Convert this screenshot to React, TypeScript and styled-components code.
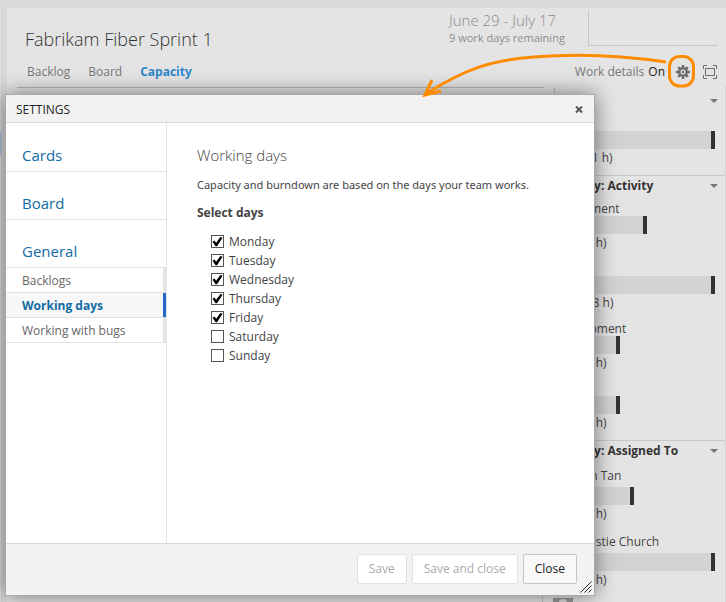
import React, { useState } from "react";
import styled, { createGlobalStyle } from "styled-components";

const GlobalStyle = createGlobalStyle`
  *, *::before, *::after { box-sizing: border-box; }
  body {
    margin: 0;
    background: #e4e4e4;
    color: #444;
    font: 12px/16px "Open Sans", "Noto Sans", sans-serif;
  }
  button, input { font: inherit; }
  h1, h2, h3, p, ul { margin: 0; padding: 0; font-weight: 400; }
  a { color: inherit; text-decoration: none; }
`;

const Page = styled.div`
  position: relative;
  height: 100vh;
  overflow: hidden;
  display: flex;
  flex-direction: column;
`;

const TopStrip = styled.div`
  flex: none;
  height: 8px;
  background: #dadada;
`;

const Columns = styled.div`
  flex: 1;
  display: flex;
  min-height: 0;
`;

const Rail = styled.div`
  flex: none;
  width: 7px;
  background: #d9d9d9;
  border-left: 1px solid #e2e2e2;
  box-shadow: inset 1px 0 #cdcdcd;
`;

const RailMark = styled.div`
  width: 2px;
  height: 23px;
  margin: 124px 0 0 -1px;
  background: #b4c4dc;
`;

const Main = styled.main`
  flex: 1;
  min-width: 0;
  display: flex;
  flex-direction: column;
`;

const TopBar = styled.header`
  display: grid;
  grid-template-columns: 1fr 139px 130px;
  height: 46px;
  padding: 0 8px 0 18px;
`;

const Title = styled.h1`
  padding-top: 17px;
  color: #333;
  font-size: 18px;
  font-weight: 300;
  line-height: 28px;
`;

const SprintDates = styled.div`
  padding-top: 2px;
  color: #8c8c8c;
  font-size: 11px;
  white-space: nowrap;
`;

const DateRange = styled.div`
  font-size: 15px;
  font-weight: 300;
  line-height: 20px;
`;

const Burndown = styled.div`
  height: 36px;
  margin-top: 2px;
  border-left: 1px solid #c6c6c6;
  border-bottom: 1px solid #c6c6c6;
`;

const ToolBar = styled.div`
  display: flex;
  align-items: center;
  justify-content: space-between;
  height: 33px;
  padding: 2px 9px 0 20px;
`;

const Tabs = styled.nav`
  display: flex;
  gap: 18px;
`;

const Tab = styled.a<{ $active?: boolean }>`
  color: ${(p) => (p.$active ? "#2b88c9" : "#777")};
  font-weight: ${(p) => (p.$active ? 700 : 400)};
`;

const Tools = styled.div`
  display: flex;
  align-items: center;
  color: #777;
`;

const OnState = styled.span`
  margin: 0 11px 0 4px;
  color: #222;
`;

const ToolButton = styled.button`
  display: flex;
  padding: 0;
  border: 0;
  background: none;

  & + & {
    margin-left: 13px;
  }
`;

const Content = styled.div`
  flex: 1;
  min-height: 0;
  display: flex;
  align-items: stretch;
`;

const Sheet = styled.div`
  flex: 1;
  margin: 0 -2px 0 10px;
  border-top: 1px solid #b8b8b8;
`;

const DetailPane = styled.aside`
  flex: none;
  width: 184px;
  border-right: 1px solid #d4d4d4;
`;

const Section = styled.section<{ $first?: boolean }>`
  margin-left: ${(p) => (p.$first ? 12 : 0)}px;
  padding: ${(p) => (p.$first ? "3px 7px 0 2px" : "0 7px 0 8px")};
  border-top: 1px solid ${(p) => (p.$first ? "transparent" : "#c8c8c8")};
  border-left: 1px solid #bdbdbd;
`;

const SectionHead = styled.h2`
  display: flex;
  align-items: center;
  justify-content: space-between;
  height: 20px;
  margin-bottom: 4px;
  color: #333;
  font-size: 12px;
  font-weight: 700;
  white-space: nowrap;
`;

const Meter = styled.div`
  padding: 0 3px 8px 0;
`;

const MeterName = styled.div<{ $person?: boolean }>`
  display: flex;
  align-items: center;
  height: ${(p) => (p.$person ? 22 : 16)}px;
  margin-left: ${(p) => (p.$person ? 2 : 0)}px;
  padding-top: ${(p) => (p.$person ? 0 : 2)}px;
  white-space: nowrap;
`;

const Avatar = styled.svg`
  width: 20px;
  height: 22px;
`;

const Track = styled.div`
  height: 18px;
  background: #d3d3d3;
  border-right: 4px solid #333;
`;

const Hours = styled.div`
  line-height: 18px;
`;

const Dialog = styled.div`
  position: absolute;
  top: 94px;
  left: 5px;
  right: 131px;
  border: 1px solid #aaa;
  background: #fff;
  box-shadow: 0 0 20px rgba(0, 0, 0, 0.5);
`;

const DialogHead = styled.div`
  display: flex;
  align-items: center;
  justify-content: space-between;
  height: 28px;
  padding: 2px 11px 0 10px;
  border-bottom: 1px solid #d8d8d8;
  background: #f2f2f2;
  color: #222;
`;

const DialogTitle = styled.h2`
  font-size: 12px;
`;

const CloseIcon = styled.button`
  display: flex;
  padding: 0;
  border: 0;
  background: none;
`;

const DialogBody = styled.div`
  display: grid;
  grid-template-columns: 161px 1fr;
  min-height: 420px;
`;

const SideNav = styled.nav`
  padding-top: 1px;
  border-right: 1px solid #e4e4e4;
`;

const NavGroup = styled.a`
  display: block;
  padding: 19px 16px 4px;
  border-bottom: 1px solid #e0e0e0;
  color: #106ba3;
  font-size: 15px;
  line-height: 24px;
`;

const NavItem = styled.a<{ $active?: boolean }>`
  display: block;
  padding: 2px 0 0 16px;
  border-bottom: 1px solid #e0e0e0;
  box-shadow: inset -3px 0 ${(p) => (p.$active ? "#2566c8" : "#e4e4e4")};
  background: ${(p) => (p.$active ? "#f7f7f7" : "#fff")};
  color: ${(p) => (p.$active ? "#106ba3" : "#666")};
  font-weight: ${(p) => (p.$active ? 700 : 400)};
  line-height: 22px;
`;

const Pane = styled.div`
  padding: 20px 30px;
`;

const PaneTitle = styled.h3`
  color: #444;
  font-size: 15px;
  font-weight: 300;
  line-height: 24px;
`;

const Intro = styled.p`
  margin-top: 10px;
  font-family: "Noto Sans", "Open Sans", sans-serif;
  font-size: 11px;
`;

const DayField = styled.fieldset`
  margin: 12px 0 0;
  padding: 0;
  border: 0;
`;

const DayLegend = styled.legend`
  padding: 0;
  margin-bottom: 11px;
  font-weight: 700;
`;

const DayRow = styled.label`
  display: flex;
  align-items: center;
  gap: 5px;
  height: 19px;
  margin-left: 14px;
`;

const Check = styled.input`
  appearance: none;
  display: grid;
  place-items: center;
  width: 13px;
  height: 13px;
  margin: 0;
  border: 1px solid #555;
  background: #fff;

  &:checked::before {
    content: "";
    width: 11px;
    height: 11px;
    background: #000;
    clip-path: polygon(5% 52%, 22% 42%, 38% 62%, 76% 8%, 96% 16%, 46% 94%, 32% 94%);
  }
`;

const Footer = styled.div`
  position: relative;
  display: flex;
  justify-content: flex-end;
  gap: 5px;
  padding: 10px 17px 11px;
  border-top: 1px solid #d8d8d8;
  background: #f2f2f2;
`;

const Button = styled.button`
  height: 30px;
  padding: 0 11px;
  border: 1px solid #c4c4c4;
  border-radius: 2px;
  background: #f8f8f8;
  color: #222;

  &:disabled {
    border-color: #e1e1e1;
    background: #fff;
    color: #aaa;
  }
`;

const Grip = styled.svg`
  position: absolute;
  right: 2px;
  bottom: 2px;
`;

const Callout = styled.svg`
  position: absolute;
  top: 50px;
  right: 26px;
  pointer-events: none;
`;

const GearIcon = () => (
  <svg width="14" height="14" viewBox="0 0 14 14" aria-hidden="true">
    <g stroke="#6e6e6e" fill="none">
      <path
        strokeWidth="2.6"
        d="M7 0V3M7 11V14M0 7H3M11 7H14M2.200 2.200L4.200 4.200M9.800 9.800L11.800 11.800M11.800 2.200L9.800 4.200M4.200 9.800L2.200 11.800"
      />
      <circle cx="7" cy="7" r="3.700" strokeWidth="2.400" />
    </g>
    <circle cx="7" cy="7" r="1.300" fill="#6e6e6e" />
  </svg>
);

const FullScreenIcon = () => (
  <svg width="14" height="14" viewBox="0 0 14 14" aria-hidden="true">
    <path
      d="M.5 4V.5H4M10 .5H13.500V4M13.500 10V13.500H10M4 13.500H.5V10M2.500 3.500H11.500V10.500H2.500Z"
      fill="none"
      stroke="#6e6e6e"
    />
  </svg>
);

const Chevron = () => (
  <svg width="8" height="4" viewBox="0 0 8 4" aria-hidden="true">
    <path d="M0 0H8L4 4Z" fill="#777" />
  </svg>
);

const PersonIcon = () => (
  <Avatar viewBox="0 0 20 22" aria-hidden="true">
    <path d="M0 1H20V21H0Z" fill="#999" />
    <circle cx="10" cy="6" r="4" fill="#ddd" />
    <path d="M3 21C3 9 17 9 17 21Z" fill="#ddd" />
  </Avatar>
);

type MeterData = { name: string; hours: string; load: number };
type SectionData = { title: string; people?: boolean; meters: MeterData[] };

const sections: SectionData[] = [
  { title: "Work", meters: [{ name: "Team", hours: "(5 of 11 h)", load: 100 }] },
  {
    title: "Work By: Activity",
    meters: [
      { name: "Deployment", hours: "(5 of 16 h)", load: 58.5 },
      { name: "Design", hours: "(11 of 18 h)", load: 100 },
      { name: "Development", hours: "(5 of 12 h)", load: 42 },
      { name: "Testing", hours: "(5 of 12 h)", load: 42 },
    ],
  },
  {
    title: "Work By: Assigned To",
    people: true,
    meters: [
      { name: "Alan Tan", hours: "(5 of 14 h)", load: 50.5 },
      { name: "Christie Church", hours: "(9 of 24 h)", load: 100 },
    ],
  },
];

const days = ["Monday", "Tuesday", "Wednesday", "Thursday", "Friday", "Saturday", "Sunday"];

export default function App() {
  const [selected, setSelected] = useState<string[]>(days.slice(0, 5));

  const toggle = (day: string) =>
    setSelected((list) => (list.includes(day) ? list.filter((d) => d !== day) : [...list, day]));

  return (
    <>
      <GlobalStyle />
      <Page>
        <TopStrip />
        <Columns>
          <Rail>
            <RailMark />
          </Rail>
          <Main>
            <TopBar>
              <Title>Fabrikam Fiber Sprint 1</Title>
              <SprintDates>
                <DateRange>June 29 - July 17</DateRange>
                9 work days remaining
              </SprintDates>
              <Burndown />
            </TopBar>
            <ToolBar>
              <Tabs>
                <Tab href="#backlog">Backlog</Tab>
                <Tab href="#board">Board</Tab>
                <Tab href="#capacity" $active>
                  Capacity
                </Tab>
              </Tabs>
              <Tools>
                Work details
                <OnState>On</OnState>
                <ToolButton aria-label="Settings">
                  <GearIcon />
                </ToolButton>
                <ToolButton aria-label="Full screen">
                  <FullScreenIcon />
                </ToolButton>
              </Tools>
            </ToolBar>
            <Content>
              <Sheet />
              <DetailPane>
                {sections.map((section, index) => (
                  <Section key={section.title} $first={index === 0}>
                    <SectionHead>
                      {section.title}
                      <Chevron />
                    </SectionHead>
                    {section.meters.map((meter) => (
                      <Meter key={meter.name}>
                        <MeterName $person={section.people}>
                          {section.people && <PersonIcon />}
                          {meter.name}
                        </MeterName>
                        <Track style={{ width: `${meter.load}%` }} />
                        <Hours>{meter.hours}</Hours>
                      </Meter>
                    ))}
                    {section.people && (
                      <MeterName $person>
                        <PersonIcon />
                      </MeterName>
                    )}
                  </Section>
                ))}
              </DetailPane>
            </Content>
          </Main>
        </Columns>

        <Dialog role="dialog" aria-labelledby="settings-title">
          <DialogHead>
            <DialogTitle id="settings-title">SETTINGS</DialogTitle>
            <CloseIcon aria-label="Close settings">
              <svg width="8" height="7" viewBox="0 0 8 7" aria-hidden="true">
                <path d="M1 .5L7 6.500M7 .5L1 6.500" stroke="#555" strokeWidth="2" />
              </svg>
            </CloseIcon>
          </DialogHead>
          <DialogBody>
            <SideNav>
              <NavGroup href="#cards">Cards</NavGroup>
              <NavGroup href="#board-settings">Board</NavGroup>
              <NavGroup href="#general">General</NavGroup>
              <NavItem href="#backlogs">Backlogs</NavItem>
              <NavItem href="#working-days" $active>
                Working days
              </NavItem>
              <NavItem href="#bugs">Working with bugs</NavItem>
            </SideNav>
            <Pane>
              <PaneTitle>Working days</PaneTitle>
              <Intro>Capacity and burndown are based on the days your team works.</Intro>
              <DayField>
                <DayLegend>Select days</DayLegend>
                {days.map((day) => (
                  <DayRow key={day}>
                    <Check
                      type="checkbox"
                      checked={selected.includes(day)}
                      onChange={() => toggle(day)}
                    />
                    {day}
                  </DayRow>
                ))}
              </DayField>
            </Pane>
          </DialogBody>
          <Footer>
            <Button disabled>Save</Button>
            <Button disabled>Save and close</Button>
            <Button>Close</Button>
            <Grip width="12" height="12" viewBox="0 0 12 12" aria-hidden="true">
              <path d="M.5 11.500L11.500 .5M4.500 11.500L11.500 4.500M8.500 11.500L11.500 8.500" stroke="#222" />
            </Grip>
          </Footer>
        </Dialog>

        <Callout width="280" height="50" viewBox="0 0 280 50" aria-hidden="true">
          <g fill="none" stroke="#ff8c00" strokeWidth="3">
            <path d="M246 12C206 6 161 3 114 7C73 10 46 18 6 44" />
            <path d="M12 30L5 45L21 41" />
            <rect x="249.500" y="6.500" width="24" height="29.500" rx="10" />
          </g>
        </Callout>
      </Page>
    </>
  );
}
